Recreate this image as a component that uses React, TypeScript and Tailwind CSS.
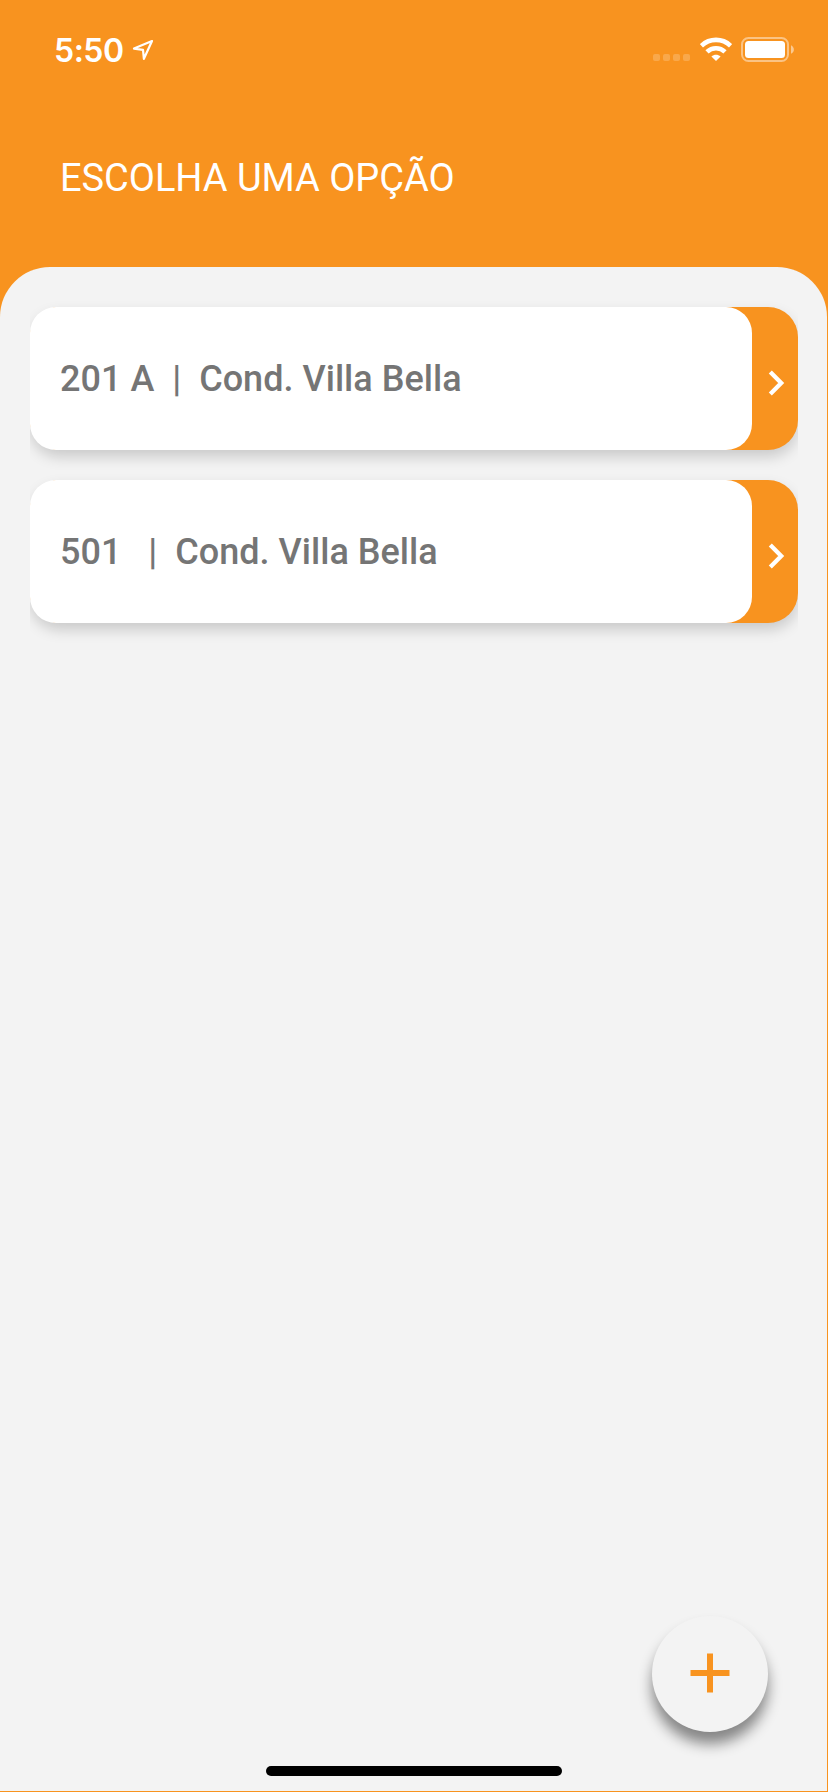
const units = ["201 A  |  Cond. Villa Bella", "501   |  Cond. Villa Bella"];

function StatusBar() {
  return (
    <div className="flex h-[100px] items-center justify-between pl-[54px] pr-[33px]">
      <div className="flex items-center">
        <span className="pt-[1px] font-['Inter'] text-[32px] leading-[40px] font-semibold tracking-[-0.5px]">5:50</span>
        <svg width="22" height="22" viewBox="0 0 22 22" className="ml-[8px]" fill="none" stroke="white" strokeWidth="2.2" strokeLinejoin="round">
          <path d="M20 2 2 9.6l9 1.2.9 9z" />
        </svg>
      </div>
      <div className="flex items-center">
        <div className="mt-[15px] flex gap-[3px]">
          <span className="size-[7px] rounded-[2px] bg-white/20" />
          <span className="size-[7px] rounded-[2px] bg-white/20" />
          <span className="size-[7px] rounded-[2px] bg-white/20" />
          <span className="size-[7px] rounded-[2px] bg-white/20" />
        </div>
        <svg width="32" height="24" viewBox="0 0 32 24" className="ml-[10px] -mt-[2px]" fill="none" stroke="white">
          <path d="M1.4 8.8C9.6 .9 22.4.9 30.6 8.8" strokeWidth="4.6" />
          <path d="M7 14.8c5-4.8 13-4.8 18 0" strokeWidth="4.6" />
          <path d="M16 24l-4.6-4.4c2.7-2.4 6.5-2.4 9.2 0z" fill="white" stroke="none" />
        </svg>
        <svg width="54" height="26" viewBox="0 0 54 26" className="ml-[9px]" fill="none">
          <rect x="1" y="1" width="46" height="23" rx="6.5" stroke="white" strokeOpacity=".45" strokeWidth="2" />
          <rect x="4" y="4" width="40" height="17" rx="3.5" fill="white" />
          <path d="M50 8.2c3.8 1.8 3.8 7 0 8.6z" fill="white" fillOpacity=".5" />
        </svg>
      </div>
    </div>
  );
}

function UnitCard({ label }: { label: string }) {
  return (
    <div className="[clip-path:inset(-30px_0)]">
      <button className="flex h-[143px] w-full rounded-[30px] bg-[#f8931f] text-left shadow-[0_7px_14px_rgba(0,0,0,0.17)]">
        <span className="flex h-full w-[722px] items-center rounded-[26px] bg-white pl-[30px]">
          <span className="whitespace-pre pt-[1px] text-[36px] leading-[42px] font-medium tracking-[0.02px] text-[#757575]">{label}</span>
        </span>
        <span className="flex h-full flex-1 items-center pt-[8px] pl-[16px]">
          <svg width="18" height="26" viewBox="0 0 18 26" fill="none" stroke="white" strokeWidth="4.3">
            <path d="M2.3 2.1 13.2 13 2.3 23.9" />
          </svg>
        </span>
      </button>
    </div>
  );
}

export default function App() {
  return (
    <div className="flex h-[1792px] w-[828px] flex-col overflow-hidden bg-[#f8931f] font-['Roboto',sans-serif] text-white">
      <StatusBar />
      <h1 className="h-[167px] pl-[60px] pt-[55px] text-[38px] leading-[46px] font-normal tracking-[-0.03px]">ESCOLHA UMA OPÇÃO</h1>
      <main className="flex h-[1524px] w-[827px] flex-col rounded-t-[50px] bg-[#f3f3f3] pt-[40px]">
        <div className="flex flex-col gap-[30px] pl-[30px] pr-[29px]">
          {units.map((u) => (
            <UnitCard key={u} label={u} />
          ))}
        </div>
        <button className="mt-auto mr-[59px] flex size-[116px] shrink-0 items-center justify-center self-end rounded-full bg-[#f3f3f3] shadow-[0_12px_14px_rgba(0,0,0,0.45)]">
          <svg width="40" height="40" viewBox="0 0 40 40" className="-mt-[2px]" fill="none" stroke="#f8931f" strokeWidth="6">
            <path d="M20 .5v39M.5 20h39" />
          </svg>
        </button>
        <div className="mt-[34px] mb-[15px] ml-[266px] h-[10px] w-[296px] shrink-0 rounded-full bg-black" />
      </main>
    </div>
  );
}
